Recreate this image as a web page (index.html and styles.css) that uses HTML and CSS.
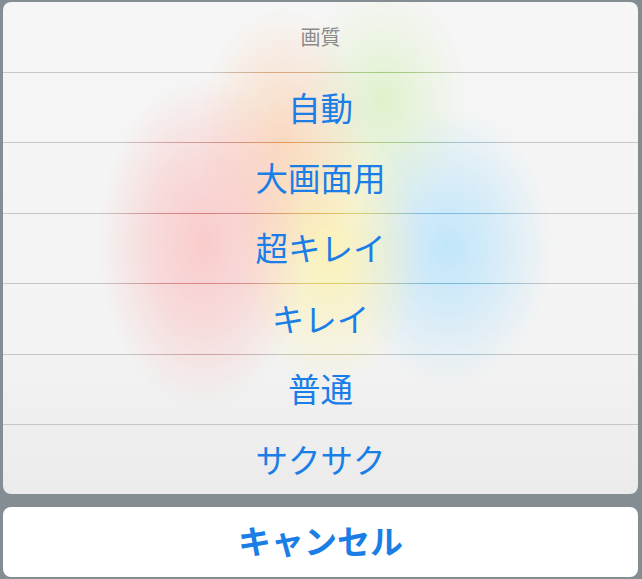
FILE: index.html
```html
<!DOCTYPE html>
<html lang="ja">
<head>
    <meta charset="UTF-8">
    <meta name="viewport" content="width=device-width, initial-scale=1.0">
    <title>画質</title>
    <link rel="stylesheet" href="styles.css">
</head>
<body>
    <div class="action-sheet">
        <div class="sheet">
            <div class="sheet-title">画質</div>
            <div class="sep sep-1"></div>
            <button class="option">自動</button>
            <div class="sep sep-2"></div>
            <button class="option">大画面用</button>
            <div class="sep sep-3"></div>
            <button class="option">超キレイ</button>
            <div class="sep sep-4"></div>
            <button class="option">キレイ</button>
            <div class="sep sep-5"></div>
            <button class="option">普通</button>
            <div class="sep sep-6"></div>
            <button class="option">サクサク</button>
        </div>
        <button class="cancel">キャンセル</button>
    </div>
</body>
</html>
```

FILE: styles.css
```css
* { margin: 0; padding: 0; box-sizing: border-box; }
html, body { height: 100%; }
body { background: #848e92; font-family: "Noto Sans CJK JP", "Noto Sans", sans-serif; padding: 2px 4px 2px 3px; }

.action-sheet { display: flex; flex-direction: column; gap: 13px; }

.sheet {
    display: flex; flex-direction: column;
    border-radius: 8px; overflow: hidden;
    background:
        radial-gradient(ellipse 105px 165px at 200px 240px, rgba(255,170,170,.55), rgba(255,172,172,.35) 50%, rgba(255,172,172,0) 100%),
        radial-gradient(ellipse 85px 130px at 280px 135px, rgba(255,195,150,.55), rgba(255,195,150,.28) 50%, rgba(255,195,150,0) 100%),
        radial-gradient(ellipse 95px 135px at 325px 250px, rgba(255,240,145,.6), rgba(255,240,145,.32) 50%, rgba(255,240,145,0) 100%),
        radial-gradient(ellipse 85px 120px at 380px 100px, rgba(205,238,170,.55), rgba(205,238,170,.25) 50%, rgba(205,238,170,0) 100%),
        radial-gradient(ellipse 105px 140px at 445px 245px, rgba(165,222,255,.65), rgba(165,222,255,.35) 50%, rgba(165,222,255,0) 100%),
        linear-gradient(#f6f6f6, #f3f3f3 70%, #ebebeb);
}

.sheet-title { height: 70px; display: flex; align-items: center; justify-content: center; font-size: 20px; color: #8b8b8b; padding-bottom: 2px; }

.option {
    height: 69.4px; border: none; background: none;
    font-family: inherit; font-size: 32.5px; color: #1a7ee6;
    display: flex; align-items: center; justify-content: center; padding-bottom: 3px;
}

.sep {
    height: 1px;
    background:
        radial-gradient(ellipse 105px 165px at 200px 240px, rgb(220,120,120), rgba(220,120,120,.7) 50%, rgba(220,120,120,0) 100%),
        radial-gradient(ellipse 85px 130px at 280px 135px, rgb(230,150,80), rgba(230,150,80,.6) 50%, rgba(230,150,80,0) 100%),
        radial-gradient(ellipse 95px 135px at 325px 250px, rgb(225,205,90), rgba(225,205,90,.7) 50%, rgba(225,205,90,0) 100%),
        radial-gradient(ellipse 85px 120px at 380px 100px, rgb(160,205,110), rgba(160,205,110,.6) 50%, rgba(160,205,110,0) 100%),
        radial-gradient(ellipse 105px 140px at 445px 245px, rgb(110,185,225), rgba(110,185,225,.7) 50%, rgba(110,185,225,0) 100%),
        #c6c6c6;
    background-size: 635px 492px;
    background-repeat: no-repeat;
}
.sep-1 { background-position: 0 -70px; }
.sep-2 { background-position: 0 -140.4px; }
.sep-3 { background-position: 0 -210.8px; }
.sep-4 { background-position: 0 -281.2px; }
.sep-5 { background-position: 0 -351.6px; }
.sep-6 { background-position: 0 -422px; }

.cancel {
    height: 70px; border: none; border-radius: 8px; background: #fff;
    font-family: inherit; font-size: 33px; font-weight: 700; color: #1a7ee6; padding-bottom: 4px;
}
```
